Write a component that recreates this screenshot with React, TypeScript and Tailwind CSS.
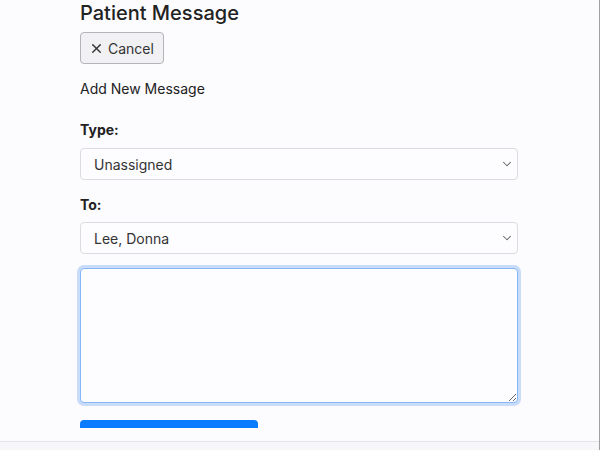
import { ChevronDown, X } from 'lucide-react';

function SelectBox({ value }: { value: string }) {
  return (
    <div className="flex h-8 w-[438px] items-center justify-between rounded-[4px] border border-[#dcdce0] bg-[#fdfcff] pl-[13px] pr-[3px] text-[14px] text-[#333]">
      <span>{value}</span>
      <ChevronDown className="h-[14px] w-[14px] text-[#666]" strokeWidth={1.75} />
    </div>
  );
}

export default function App() {
  return (
    <div className="h-[450px] w-[600px] overflow-hidden border-r border-[#a0a0a0] bg-[#fcfbfe] font-['Inter',sans-serif] text-[#222]">
      <div className="h-[428px] overflow-hidden pl-[80px]">
        <h1 className="pt-[1px] text-[20px] font-medium leading-[24px] text-[#222]">Patient Message</h1>
        <button className="mt-[7px] flex h-8 items-center gap-[4px] rounded-[4px] border border-[#b4b4b8] bg-[#f1f1f3] pl-[8px] pr-[9px] text-[14px] text-[#333]">
          <X className="h-[15px] w-[15px]" strokeWidth={2.25} />
          Cancel
        </button>
        <p className="mt-[16px] text-[14px] leading-[18px] text-[#222]">Add New Message</p>
        <label className="mt-[23px] block text-[14px] font-bold leading-[18px]">Type:</label>
        <div className="mt-[9px]">
          <SelectBox value="Unassigned" />
        </div>
        <label className="mt-[16px] block text-[14px] font-bold leading-[18px]">To:</label>
        <div className="mt-[8px]">
          <SelectBox value="Lee, Donna" />
        </div>
        <textarea className="mt-[14px] block h-[135px] w-[438px] resize-y rounded-[4px] border border-[#86b7f5] bg-[#fdfcff] shadow-[0_0_0_3px_#c9dcf9] outline-none" />
        <button className="mt-[17px] block h-[20px] w-[178px] rounded-[4px] bg-[#0a7bff]" />
      </div>
      <div className="h-[13px]" />
      <div className="h-[9px] border-t border-[#e4e4e8] bg-[#f7f7f9]" />
    </div>
  );
}
